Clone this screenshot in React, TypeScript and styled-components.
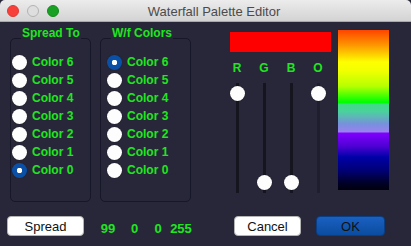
import React from 'react';
import styled, { createGlobalStyle } from 'styled-components';

const GREEN = '#1fe61f';

const GlobalStyle = createGlobalStyle`
  html, body {
    margin: 0;
    padding: 0;
    background: #272739;
  }
  body {
    font-family: "Liberation Sans", Arial, sans-serif;
  }
`;

const Window = styled.div`
  width: 411px;
  height: 246px;
  display: flex;
  flex-direction: column;
  background: #272739;
  border-radius: 5px 5px 0 0;
  overflow: hidden;
`;

const TitleBar = styled.div`
  height: 21px;
  display: grid;
  align-items: center;
  background: linear-gradient(#ececec, #d3d3d3);
  border-bottom: 1px solid #a9a9a9;

  > * {
    grid-area: 1 / 1;
  }
`;

const Lights = styled.div`
  justify-self: start;
  display: flex;
  gap: 8px;
  padding-left: 7px;
  padding-top: 1px;
`;

const Light = styled.span<{ $fill: string; $edge: string }>`
  width: 12px;
  height: 12px;
  box-sizing: border-box;
  border-radius: 50%;
  background: ${p => p.$fill};
  border: 1px solid ${p => p.$edge};
`;

const Title = styled.div`
  justify-self: center;
  margin-left: 17px;
  padding-top: 2px;
  font-size: 13px;
  color: #4b4b4b;
`;

const MainRow = styled.div`
  display: flex;
  align-items: flex-start;
  padding: 4px 0 0 10px;
`;

const Group = styled.fieldset<{ $width: number; $gap: number }>`
  margin: 0 0 0 ${p => p.$gap}px;
  padding: 0;
  min-inline-size: 0;
  width: ${p => p.$width}px;
  height: 176px;
  box-sizing: border-box;
  border: 1px solid #17172a;
  border-radius: 5px;
`;

const Legend = styled.legend`
  margin-left: 10px;
  padding: 0 1px 11px;
  font-size: 12px;
  line-height: 14px;
  font-weight: 700;
  color: ${GREEN};
`;

const RadioList = styled.div<{ $inset: number }>`
  display: flex;
  flex-direction: column;
  padding: 2px 0 0 ${p => p.$inset}px;
`;

const RadioRow = styled.label`
  height: 18px;
  display: flex;
  align-items: center;
  gap: 5px;
  font-size: 12px;
  font-weight: 700;
  color: ${GREEN};
`;

const RadioDot = styled.span<{ $checked: boolean }>`
  width: 15px;
  height: 15px;
  box-sizing: border-box;
  border-radius: 50%;
  flex: none;
  background: ${p => (p.$checked ? 'radial-gradient(circle, #fff 0 2.5px, #0a50a6 3px)' : '#fdfdfd')};
  box-shadow: 0 0 1px rgba(0, 0, 0, 0.6);
`;

const Controls = styled.div`
  width: 101px;
  margin: 6px 0 0 39px;
  display: flex;
  flex-direction: column;
`;

const Swatch = styled.div<{ $color: string }>`
  height: 20px;
  background: ${p => p.$color};
`;

const ChannelGrid = styled.div<{ $top: number }>`
  display: grid;
  grid-template-columns: repeat(4, 14px);
  column-gap: 13px;
  justify-items: center;
  margin-top: ${p => p.$top}px;
`;

const ChannelLabel = styled.span`
  font-size: 12px;
  line-height: 14px;
  font-weight: 700;
  color: ${GREEN};
`;

const Slider = styled.div`
  position: relative;
  width: 14px;
  height: 110px;
  display: flex;
  justify-content: center;
`;

const Track = styled.div<{ $dim?: boolean }>`
  width: 3px;
  height: 100%;
  background: ${p => (p.$dim ? '#1e1e2e' : '#15151f')};
`;

const Thumb = styled.span`
  position: absolute;
  left: -0.5px;
  width: 15px;
  height: 15px;
  border-radius: 50%;
  background: #fdfdfd;
  box-shadow: 0 0 1px rgba(0, 0, 0, 0.7);
`;

const Waterfall = styled.div`
  width: 51px;
  height: 160px;
  margin: 4px 0 0 7px;
  background: linear-gradient(
    to bottom,
    #ff4400 0px,
    #ff9500 15px,
    #ffff00 32px,
    #f4ff00 40px,
    #b8ff00 56px,
    #00ff00 72px,
    #00ff00 73px,
    #40dc84 74px,
    #4ccfa0 82px,
    #7890dc 94px,
    #9a82f0 102px,
    #8000ff 103px,
    #5000d4 116px,
    #0000a8 127px,
    #000078 140px,
    #00002e 152px,
    #00000c 160px
  );
`;

const Footer = styled.div`
  display: flex;
  align-items: center;
  height: 20px;
  margin-top: 14px;
  padding-left: 7px;
`;

const Button = styled.button<{ $width: number; $gap: number; $primary?: boolean }>`
  width: ${p => p.$width}px;
  height: 20px;
  margin: 0 0 0 ${p => p.$gap}px;
  padding: 0;
  box-sizing: border-box;
  border-radius: 4px;
  border: 1px solid ${p => (p.$primary ? '#0a3f86' : '#b4b4b4')};
  background: ${p => (p.$primary ? 'linear-gradient(#1a60c2, #0a4c9f)' : '#ffffff')};
  font-family: "Liberation Sans", Arial, sans-serif;
  font-size: 13px;
  color: #111;
`;

const Readout = styled.div`
  display: grid;
  grid-template-columns: 24px 29px 18px 28px;
  margin: 4px 0 0 12px;
  justify-items: center;
`;

const Value = styled.span`
  font-size: 13px;
  font-weight: 700;
  color: ${GREEN};
`;

const colors = [6, 5, 4, 3, 2, 1, 0];

const channels = [
  { label: 'R', value: 1 },
  { label: 'G', value: 0 },
  { label: 'B', value: 0 },
  { label: 'O', value: 1, dim: true },
];

function ColorGroup({ title, width, gap, inset, selected }: { title: string; width: number; gap: number; inset: number; selected: number }) {
  return (
    <Group $width={width} $gap={gap}>
      <Legend>{title}</Legend>
      <RadioList $inset={inset}>
        {colors.map(c => (
          <RadioRow key={c}>
            <RadioDot $checked={c === selected} />
            Color {c}
          </RadioRow>
        ))}
      </RadioList>
    </Group>
  );
}

export default function App() {
  return (
    <>
      <GlobalStyle />
      <Window>
        <TitleBar>
          <Lights>
            <Light $fill="#f8403a" $edge="#de3a34" />
            <Light $fill="#dedede" $edge="#b2b2b2" />
            <Light $fill="#19a123" $edge="#148c1d" />
          </Lights>
          <Title>Waterfall Palette Editor</Title>
        </TitleBar>

        <MainRow>
          <ColorGroup title="Spread To" width={81} gap={0} inset={1} selected={0} />
          <ColorGroup title="W/f Colors" width={91} gap={9} inset={6} selected={6} />

          <Controls>
            <Swatch $color="#ff0000" />
            <ChannelGrid $top={9}>
              {channels.map(ch => (
                <ChannelLabel key={ch.label}>{ch.label}</ChannelLabel>
              ))}
            </ChannelGrid>
            <ChannelGrid $top={8}>
              {channels.map(ch => (
                <Slider key={ch.label}>
                  <Track $dim={ch.dim} />
                  <Thumb style={{ top: 3 + (1 - ch.value) * 89 }} />
                </Slider>
              ))}
            </ChannelGrid>
          </Controls>

          <Waterfall />
        </MainRow>

        <Footer>
          <Button $width={77} $gap={0}>Spread</Button>
          <Readout>
            <Value>99</Value>
            <Value>0</Value>
            <Value>0</Value>
            <Value>255</Value>
          </Readout>
          <Button $width={67} $gap={39}>Cancel</Button>
          <Button $width={69} $gap={15} $primary>OK</Button>
        </Footer>
      </Window>
    </>
  );
}
